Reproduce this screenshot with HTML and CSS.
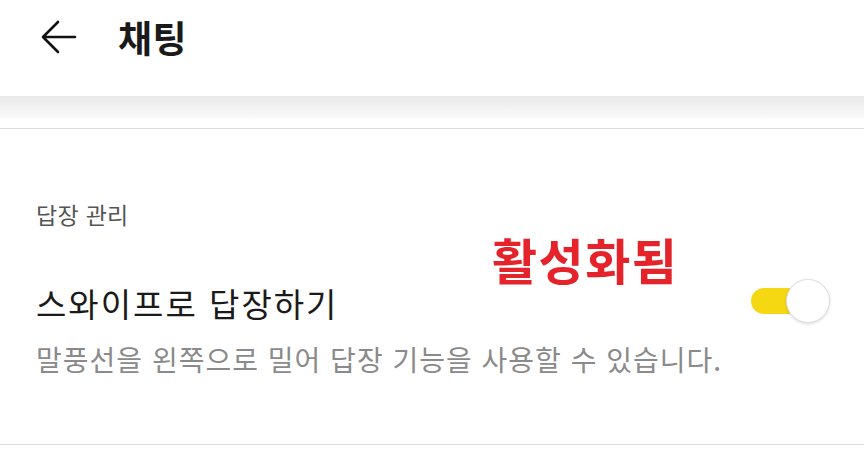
FILE: index.html
```html
<!DOCTYPE html>
<html lang="ko">
<head>
<meta charset="UTF-8" />
<meta name="viewport" content="width=device-width, initial-scale=1" />
<title>채팅</title>
<link rel="stylesheet" href="styles.css">
</head>
<body>
  <header class="top-bar">
    <div class="top-row">
      <svg class="back-icon" width="36" height="34" viewBox="0 0 36 34">
        <path d="M34 17 H3 M17 2 L2 17 L17 32" fill="none" stroke="#111" stroke-width="2.6" stroke-linecap="round" stroke-linejoin="round" />
      </svg>
      <h1>채팅</h1>
    </div>
  </header>
  <div class="shade"></div>

  <section class="settings">
    <p class="group-label">답장 관리</p>
    <div class="setting-row">
      <div class="setting-text">
        <h2>스와이프로 답장하기</h2>
        <p class="desc">말풍선을 왼쪽으로 밀어 답장 기능을 사용할 수 있습니다.</p>
      </div>
      <div class="switch on">
        <span class="knob"></span>
      </div>
    </div>
    <span class="note">활성화됨</span>
  </section>
</body>
</html>
```

FILE: styles.css
```css
body {
  margin: 0;
  background: #fff;
  font-family: "Noto Sans CJK KR", "Noto Sans", sans-serif;
  color: #111;
}
.top-bar {
  height: 96px;
  background: #fff;
}
.top-row {
  height: 74px;
  display: flex;
  align-items: center;
  padding-left: 41px;
}
.back-icon {
  display: block;
}
h1 {
  margin: 0 0 0 41px;
  font-size: 37px;
  font-weight: bold;
  letter-spacing: 0.5px;
  color: #1a1a1a;
}
.shade {
  height: 32px;
  background: linear-gradient(#e9e9e9, #fafafa 22px, #fff 23px);
  border-bottom: 1px solid #dcdcdc;
}
.settings {
  position: relative;
  padding: 70px 36px 0 36px;
  border-bottom: 1px solid #dcdcdc;
  height: 245px;
}
.group-label {
  margin: 0;
  font-size: 23px;
  line-height: 30px;
  letter-spacing: 0.3px;
  color: #555;
}
.setting-row {
  display: flex;
  justify-content: space-between;
  align-items: flex-start;
  margin-top: 53px;
}
h2 {
  margin: 0;
  font-size: 33px;
  font-weight: normal;
  line-height: 42px;
  letter-spacing: 2px;
  color: #1a1a1a;
}
.desc {
  margin: 17px 0 0 0;
  font-size: 28px;
  line-height: 36px;
  letter-spacing: 1px;
  color: #8a8a8a;
}
.switch {
  position: relative;
  width: 52px;
  height: 26px;
  border-radius: 13px;
  background: #f6d812;
  margin: 6px 25px 0 0;
}
.knob {
  position: absolute;
  top: -9px;
  left: 35px;
  width: 42px;
  height: 42px;
  border-radius: 50%;
  background: #fff;
  border: 1px solid #dedede;
  box-shadow: 0 1px 3px rgba(0,0,0,0.15);
}
.note {
  position: absolute;
  left: 492px;
  top: 100px;
  font-size: 49px;
  font-weight: bold;
  letter-spacing: 1.5px;
  color: #e4232a;
  line-height: 60px;
}
```
